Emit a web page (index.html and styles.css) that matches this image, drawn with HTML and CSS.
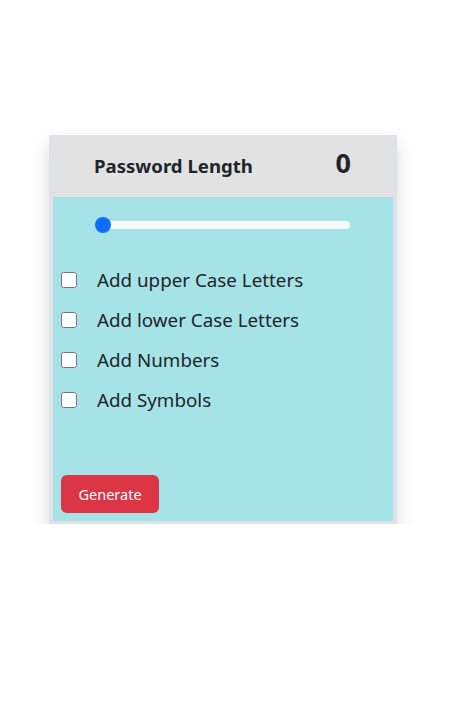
FILE: index.html
```html
<!DOCTYPE html>
<html lang="en">
<head>
<meta charset="utf-8">
<title>Password Generator</title>
<link rel="stylesheet" href="styles.css">
</head>
<body>
<div class="card">
  <div class="card-header">
    <span class="label">Password Length</span>
    <span class="count">0</span>
  </div>
  <div class="card-body">
    <div class="range-row">
      <input class="range" type="range" min="0" max="20" value="0">
    </div>
    <div class="options">
      <label class="option"><input type="checkbox" class="check"><span>Add upper Case Letters</span></label>
      <label class="option"><input type="checkbox" class="check"><span>Add lower Case Letters</span></label>
      <label class="option"><input type="checkbox" class="check"><span>Add Numbers</span></label>
      <label class="option"><input type="checkbox" class="check"><span>Add Symbols</span></label>
    </div>
    <button class="btn">Generate</button>
  </div>
</div>
</body>
</html>
```

FILE: styles.css
```css
* { box-sizing: border-box; }
html, body { margin: 0; padding: 0; background: #fff; }
body {
  font-family: "Noto Sans", "Open Sans", sans-serif;
  color: #212529;
  padding: 135px 0 0 49px;
}
.card {
  width: 348px;
  background: #dfe1e6;
  padding: 0 4px 3px 4px;
  box-shadow: 0 8px 16px rgba(0,0,0,0.15);
}
.card-header {
  height: 62px;
  background: #e2e2e2;
  display: flex;
  align-items: center;
  padding: 0 42px 0 41px;
  justify-content: space-between;
}
.label {
  font-size: 18.6px;
  font-weight: 700;
  margin-top: -2px;
}
.count {
  font-size: 27px;
  font-weight: 700;
  margin-top: -8px;
}
.card-body {
  background: #a6e3e6;
  padding: 0 8px 8px 8px;
  height: 324px;
  display: flex;
  flex-direction: column;
}
.range-row {
  padding: 20px 0 0 34px;
  height: 56px;
}
.range {
  -webkit-appearance: none;
  appearance: none;
  width: 255px;
  height: 16px;
  margin: 0;
  background: transparent;
  display: block;
}
.range::-webkit-slider-runnable-track {
  height: 8px;
  background: #f6f8fb;
  border-radius: 4px;
}
.range::-webkit-slider-thumb {
  -webkit-appearance: none;
  appearance: none;
  width: 16px;
  height: 16px;
  border-radius: 50%;
  background: #0d6efd;
  margin-top: -4px;
  border: 0;
}
.options {
  display: flex;
  flex-direction: column;
  gap: 10px;
  margin-top: 12px;
}
.option {
  display: flex;
  align-items: center;
  gap: 20px;
  height: 30px;
  font-size: 18.8px;
}
.check {
  width: 16px;
  height: 16px;
  margin: 0;
  flex: none;
}
.btn {
  margin-top: auto;
  align-self: flex-start;
  width: 98px;
  height: 38px;
  border: 0;
  border-radius: 6px;
  background: #dc3545;
  color: #fff;
  font-family: inherit;
  font-size: 14.5px;
  padding: 0;
}
```
